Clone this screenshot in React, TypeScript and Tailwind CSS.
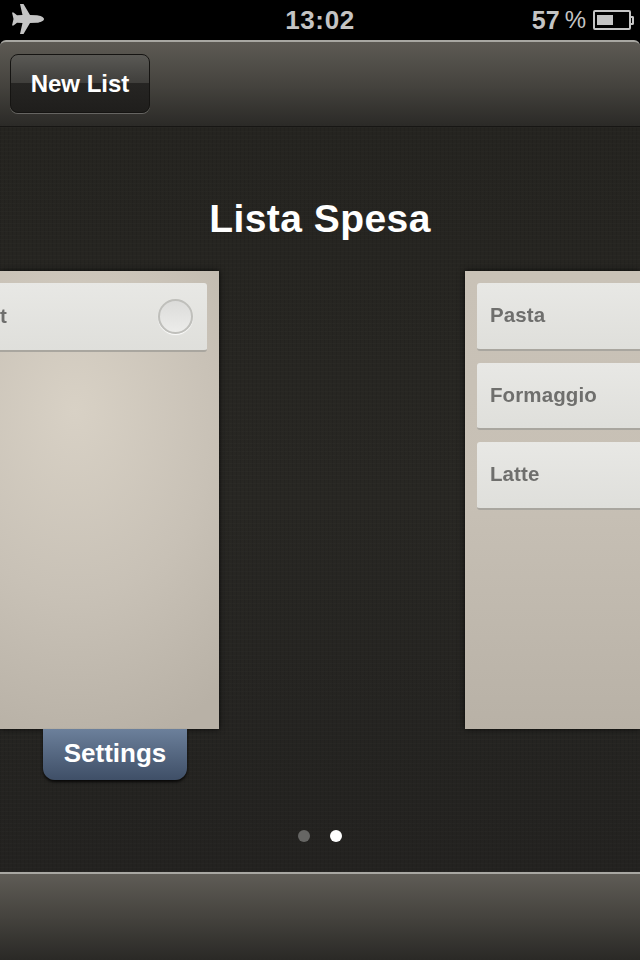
const font = "font-['Liberation_Sans',Arial,sans-serif]";
const linenDark = "bg-[repeating-linear-gradient(0deg,rgba(255,255,255,0.012)_0px,rgba(255,255,255,0.012)_1px,transparent_1px,transparent_4px),repeating-linear-gradient(90deg,rgba(0,0,0,0.07)_0px,rgba(0,0,0,0.07)_1px,transparent_1px,transparent_4px),linear-gradient(to_bottom,#252420,#282723_50%,#232220)]";

function Row({ label, check, className }: { label?: string; check?: boolean; className: string }) {
  return (
    <div className={`shrink-0 flex items-center bg-gradient-to-b from-[#e8e8e5] to-[#dfdfdb] border-b-2 border-[#a9a69f] ${className}`}>
      {label && <span className="pl-[13px] text-[20.5px] font-bold tracking-[0.1px] text-[#6f6f6d] blur-[0.5px] pb-[1px]">{label}</span>}
      {check && (
        <>
          <span className="text-[20.5px] font-bold text-[#6f6f6d] blur-[0.5px] pb-[1px]">t</span>
          <div className="ml-auto mr-[14px] mb-[1px] w-[35px] h-[35px] rounded-full bg-gradient-to-b from-[#dcdcda] to-[#ececea] border-2 border-[#bfbfbb] shadow-[0_1px_1px_rgba(255,255,255,0.9)]" />
        </>
      )}
    </div>
  );
}

function Paper({ className, children }: { className: string; children: React.ReactNode }) {
  return (
    <div className={`h-[458px] pt-[12px] flex flex-col shadow-[0_0_6px_rgba(0,0,0,0.75)] ${className}`}>
      {children}
    </div>
  );
}

export default function App() {
  return (
    <div className={`w-[640px] h-[960px] overflow-hidden flex flex-col bg-black ${font}`}>
      {/* status bar */}
      <div className="h-[40px] shrink-0 flex items-center justify-between text-[#c4c4c4] relative">
        <svg width="34" height="36" viewBox="10 2 34 36" className="ml-[10px]">
          <path fill="#c4c4c4" d="M44 19 C44 17 40 15.5 37 15.2 L30 15 L23.5 4 L20 4 L22.5 15 L17 15.2 L13.5 12.5 L12 12.5 L13.5 19 L12 25.5 L13.5 25.5 L17 22.8 L22.5 23 L20 34 L23.5 34 L30 23 L37 22.8 C40 22.5 44 21 44 19 Z" />
        </svg>
        <span className="absolute left-0 right-0 text-center text-[26px] font-bold leading-none tracking-[0.6px]">13:02</span>
        <div className="flex items-center mr-[6px]">
          <span className="text-[25px] font-bold leading-none mr-[5px]">57</span>
          <span className="text-[24px] leading-none mr-[7px]">%</span>
          <div className="w-[38px] h-[20px] border-2 border-[#c4c4c4] rounded-[2px] px-[2px] py-[3px] flex">
            <div className="w-[16px] bg-[#c4c4c4]" />
          </div>
          <div className="w-[3px] h-[9px] border-2 border-l-0 border-[#c4c4c4] rounded-r-[2px]" />
        </div>
      </div>

      {/* nav bar */}
      <div className="h-[87px] shrink-0 rounded-t-[6px] border-t-2 border-[#a8a7a2] border-b border-b-[#171614] bg-gradient-to-b from-[#5d5a54] via-[#46443f] to-[#2b2a27] flex items-start pl-[10px] pt-[12px]">
        <div className="w-[140px] h-[59px] rounded-[8px] border border-[#151412] shadow-[0_1px_0_rgba(255,255,255,0.25)] bg-[linear-gradient(to_bottom,#5a5955_0%,#3f3e3b_50%,#262523_50%,#1f1e1c_100%)] flex items-center justify-center text-white text-[24px] font-bold">
          New List
        </div>
      </div>

      {/* main */}
      <div className={`flex-1 min-h-0 flex flex-col ${linenDark}`}>
        <h1 className="h-[144px] shrink-0 pt-[66px] text-center text-white text-[39px] leading-[52px] font-bold tracking-[0.45px]">Lista Spesa</h1>

        <div className="flex justify-between items-start">
          <div className="w-[219px] flex flex-col">
            <Paper className="w-[219px] bg-[radial-gradient(ellipse_260px_340px_at_75px_139px,#d8d1c5_0%,#c8c1b6_55%,#b8b1a6_100%)]">
              <Row check className="w-[207px] h-[69px] rounded-r-[3px]" />
            </Paper>
            <div className="ml-[43px] w-[144px] h-[51px] rounded-b-[12px] bg-gradient-to-b from-[#6c809b] to-[#3f4f67] shadow-[0_2px_3px_rgba(0,0,0,0.8)] flex items-center justify-center text-white text-[26px] font-bold pb-[2px]">
              Settings
            </div>
          </div>
          <Paper className="w-[175px] pl-[12px] bg-gradient-to-b from-[#c9c2b7] via-[#c7c0b5] to-[#b8b1a6]">
            <Row label="Pasta" className="h-[68px] rounded-l-[3px]" />
            <Row label="Formaggio" className="h-[67px] mt-[12px] rounded-l-[3px]" />
            <Row label="Latte" className="h-[68px] mt-[12px] rounded-l-[3px]" />
          </Paper>
        </div>

        <div className="mt-[50px] flex justify-center gap-[20px]">
          <span className="w-[12px] h-[12px] rounded-full bg-[#666664]" />
          <span className="w-[12px] h-[12px] rounded-full bg-white" />
        </div>
      </div>

      {/* bottom bar */}
      <div className="h-[88px] shrink-0 border-t-2 border-[#a8a7a2] bg-gradient-to-b from-[#5f5c56] via-[#45433e] to-[#2a2926]" />
    </div>
  );
}
